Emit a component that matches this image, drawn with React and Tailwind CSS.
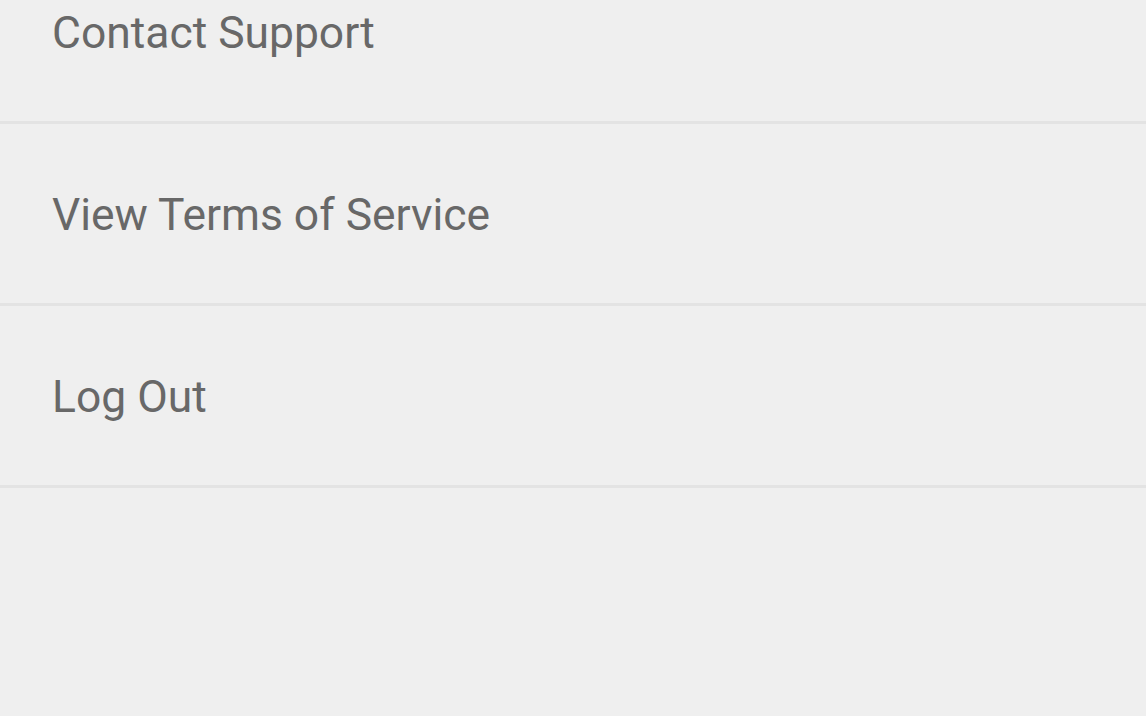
const items = ['Contact Support', 'View Terms of Service', 'Log Out'];

export default function App() {
  return (
    <div className="h-[716px] w-full overflow-hidden bg-[#efefef]" style={{ fontFamily: 'Roboto, "Noto Sans", sans-serif' }}>
      <ul className="-mt-[58px]">
        {items.map((label) => (
          <li key={label} className="h-[182px] border-b-[3px] border-[#e3e3e3] pl-[52px] pt-[69px]">
            <span className="block text-[44.4px] leading-none text-[#686868]">{label}</span>
          </li>
        ))}
      </ul>
    </div>
  );
}
